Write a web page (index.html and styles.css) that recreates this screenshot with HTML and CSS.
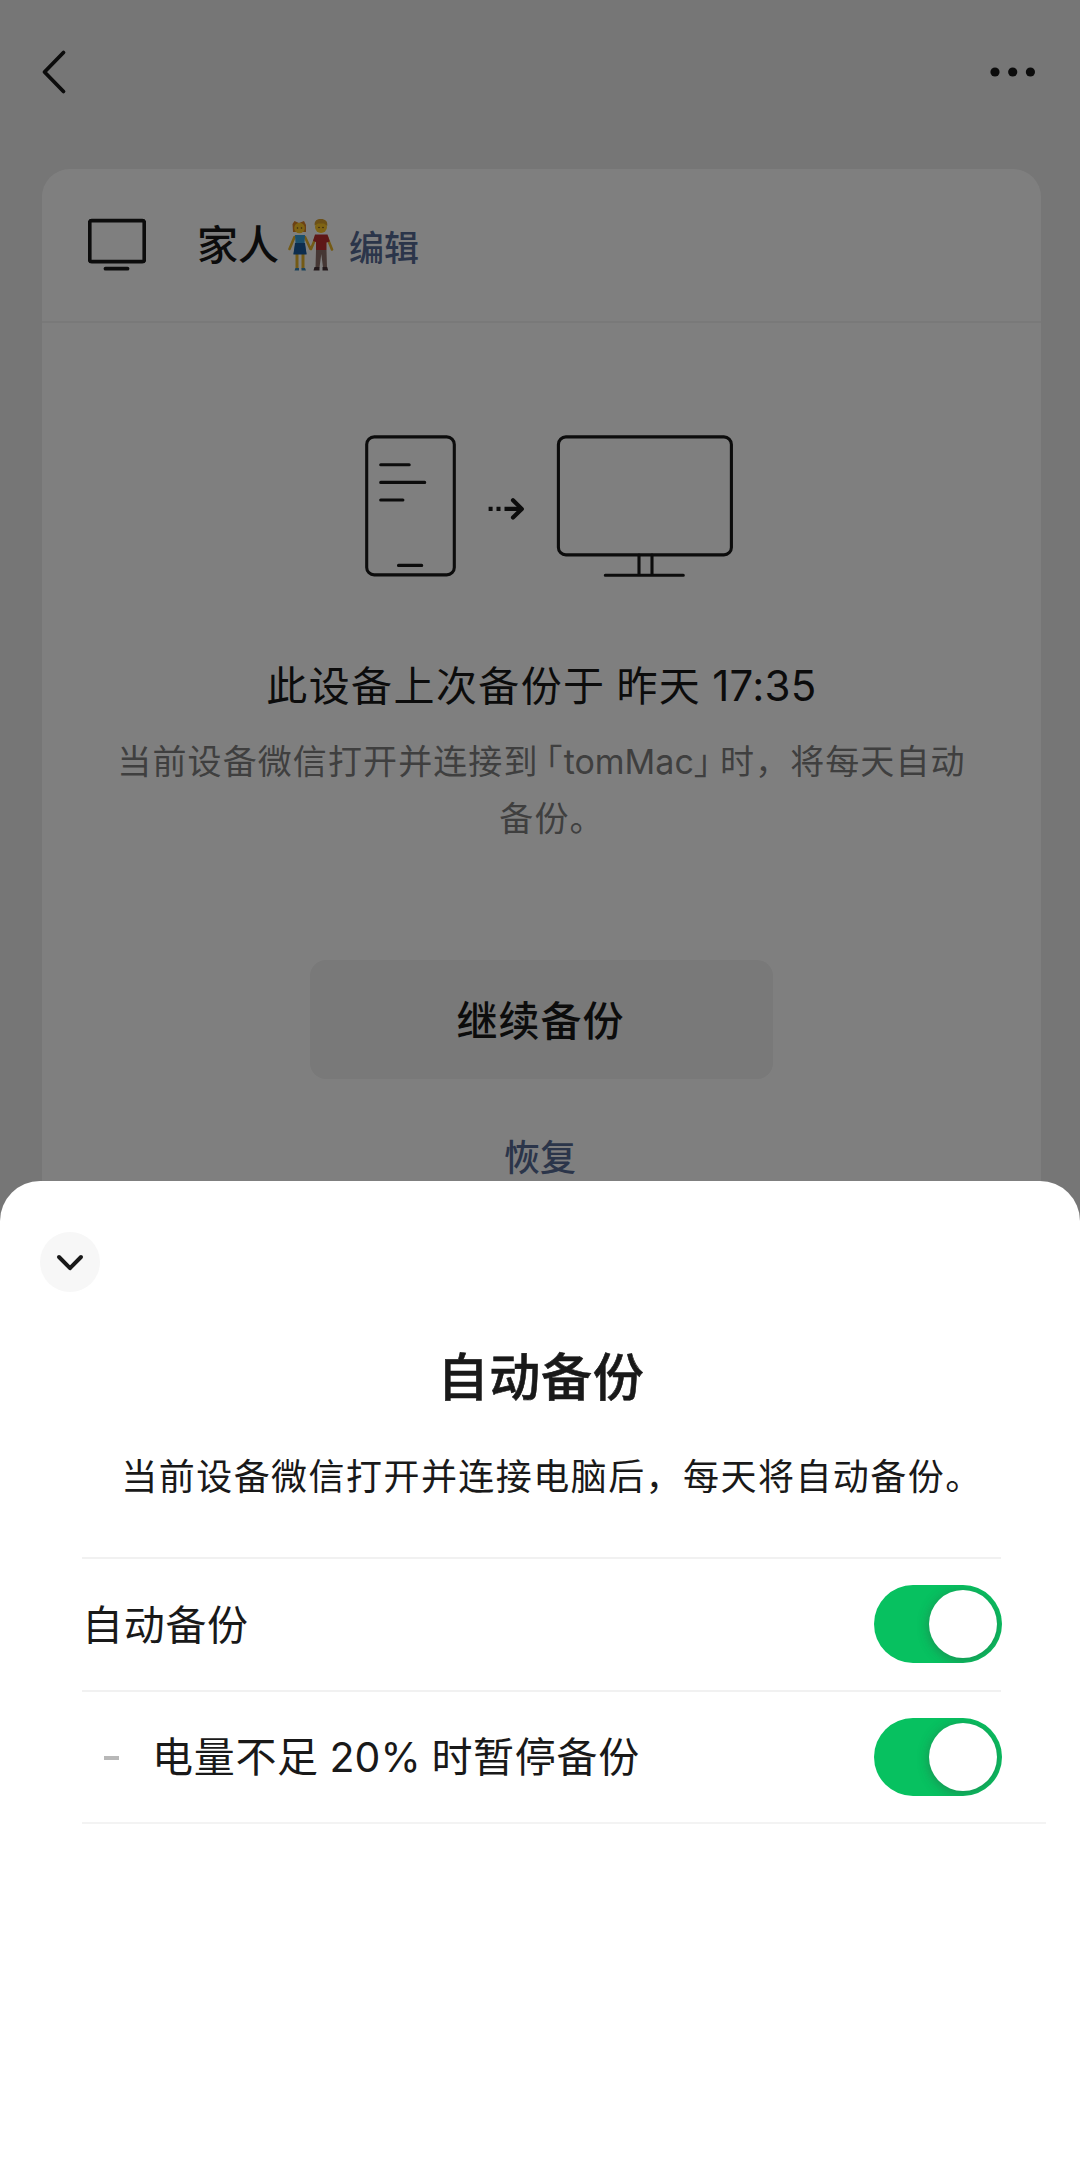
FILE: index.html
```html
<!DOCTYPE html>
<html lang="zh-CN">
<head>
<meta charset="utf-8">
<title>自动备份</title>
<link rel="stylesheet" href="styles.css">
</head>
<body>
<div class="screen">
  <header class="nav">
    <svg class="nav-back" viewBox="0 0 26 46"><path d="M22.5 3.5 3.5 23l19 19.500"/></svg>
    <svg class="nav-more" viewBox="0 0 46 10"><circle cx="5" cy="5" r="4.600"/><circle cx="22.700" cy="5" r="4.600"/><circle cx="40.400" cy="5" r="4.600"/></svg>
  </header>

  <main class="card">
    <div class="device">
      <svg class="device-icon" viewBox="0 0 58 54"><rect x="1.700" y="2.700" width="54.600" height="41" rx="2"/><path d="M17.500 50.700h22"/></svg>
      <span class="device-name">家人</span>
      <svg class="couple" viewBox="0 0 46 54">
        <g fill="none" stroke="#e8b52b" stroke-width="2.600" stroke-linecap="round">
          <path d="M6.500 19 1.500 31M17 19l5.500 12M28 19l-5 12M39 19l5 12.500"/>
          <path d="M9 33v17M15 33v17" stroke-width="3"/>
        </g>
        <path fill="#39a0d8" d="M7 17h10l-.5 8 2 11h-13l2-11z"/>
        <path fill="#1a5a9c" d="M7 25h10l1.600 11.500H5.400z"/>
        <path fill="#d98228" d="M5 14 4.500 6l2-3L11 5l5-2 2 4v7z"/>
        <circle cx="11.500" cy="10" r="5.300" fill="#ffc928"/>
        <path fill="#bd2f2f" d="M27 16.500h12.500l2.300 7-3.300 1v7.500H28v-8l-3-1z"/>
        <path fill="#8b6f68" d="M28 32h10.500l.5 17.500h-4L33.300 36l-1.800 13.500h-4z"/>
        <path fill="#473336" d="M26.500 49h5v3.500h-6zM34.500 49h4.700l1 3.500h-5.700z"/>
        <circle cx="33" cy="9" r="6" fill="#ffc928"/>
        <path fill="#d8a12e" d="M26.700 7.500C26 2 30 .8 33 1c4 0 7 2 6.200 7L36 5.500h-6z"/>
        <g fill="#6b4a25"><circle cx="9.500" cy="10" r=".8"/><circle cx="13.500" cy="10" r=".8"/><circle cx="31" cy="9.500" r=".8"/><circle cx="35" cy="9.500" r=".8"/></g>
        <path fill="#3b86b8" d="M7.500 50h3.500v2.500H6.500zM13.500 50H17l1 2.500h-4.500z"/>
      </svg>
      <a class="device-edit">编辑</a>
    </div>

    <section class="backup">
      <svg class="art" viewBox="0 0 370 144">
        <rect x="2.700" y="2.900" width="87.600" height="138" rx="7.500"/>
        <path d="M16.700 30.700h28.500M16.700 48.400h44M16.700 66h22.200M34.500 131.400h23.200"/>
        <g class="art-arrow"><path d="M124.600 74.900h4M132.500 74.900h4M140.500 74.900h17" stroke-linecap="butt"/><path d="m149 66.200 8.800 8.700-8.800 8.700"/></g>
        <rect x="194.400" y="2.900" width="173" height="118" rx="7.500"/>
        <path d="M275 121v20M288 121v20M241.300 141.200h78"/>
      </svg>
      <h2 class="status">此设备上次备份于 昨天 <span class="time">17:35</span></h2>
      <p class="hint">当前设备微信打开并连接到<span class="half open">「</span><span class="latin">tomMac</span><span class="half close">」</span>时，将每天自动<br>备份<span class="half stop">。</span></p>
      <div class="resume">继续备份</div>
      <a class="restore">恢复</a>
    </section>
  </main>
</div>

<div class="mask"></div>

<div class="sheet">
  <div class="collapse"><svg viewBox="0 0 28 18"><path d="m3 3 11 11.200L25 3"/></svg></div>
  <h1 class="sheet-title">自动备份</h1>
  <p class="sheet-desc">当前设备微信打开并连接电脑后，每天将自动备份。</p>
  <div class="options">
    <div class="option"><span class="label">自动备份</span><span class="toggle"><i class="knob"></i></span></div>
    <div class="option"><i class="dash"></i><span class="label">电量不足 <span class="latin">20%</span> 时暂停备份</span><span class="toggle"><i class="knob"></i></span></div>
    <div class="rule"></div>
  </div>
</div>
</body>
</html>
```

FILE: styles.css
```css
* { box-sizing: border-box; margin: 0; padding: 0; }
html, body { width: 1080px; height: 2167px; overflow: hidden; }
body {
  position: relative;
  background: #ededed;
  color: #191919;
  font-family: Inter, "Noto Sans CJK SC", sans-serif;
}
svg { display: block; flex: none; fill: none; stroke-linecap: round; stroke-linejoin: round; }

.screen { height: 1181px; overflow: hidden; padding: 0 39px 0 42px; }
.nav { height: 169px; padding: 49px 5px 0 0; display: flex; justify-content: space-between; align-items: flex-start; }
.nav-back { width: 26px; height: 46px; margin-left: -1px; stroke: #191919; stroke-width: 3.8px; }
.nav-more { width: 46px; height: 10px; margin-top: 18px; fill: #191919; }

.card { height: 1100px; border-radius: 28px; background: #fff; }
.device { height: 154px; display: flex; align-items: center; padding-left: 46px; border-bottom: 2px solid #f2f2f2; }
.device-icon { width: 58px; height: 54px; stroke: #191919; stroke-width: 3.8px; }
.device-name { margin-left: 51px; font-size: 41px; line-height: 60px; font-weight: 500; }
.couple { width: 46px; height: 54px; margin-left: 9px; }
.device-edit { margin-left: 15px; padding-top: 5px; font-size: 35px; line-height: 52px; font-weight: 500; color: #576b95; }

.backup { display: flex; flex-direction: column; align-items: center; }
.art { width: 370px; height: 144px; margin: 111px 0 0 14px; stroke: #191919; stroke-width: 3.1px; }
.art-arrow { stroke-width: 4.2px; }
.status { margin-top: 78px; font-size: 41px; line-height: 60px; font-weight: 400; letter-spacing: 1.4px; word-spacing: -2px; white-space: nowrap; }
.time { font-size: 42px; letter-spacing: .3px; }
.hint { margin-top: 17px; font-size: 34px; line-height: 57px; letter-spacing: 1.1px; color: #7f7f7f; text-align: center; white-space: nowrap; }
.half { font-feature-settings: "halt"; }
.open { margin-left: 7px; }
.close { margin-right: 8px; }
.stop { margin-right: -4px; }
.latin { letter-spacing: 0; }
.resume { width: 463px; height: 119px; margin-top: 113px; padding: 2px 2px 0 0; border-radius: 16px; background: #f2f2f2; font-size: 41px; line-height: 119px; font-weight: 500; letter-spacing: 1px; text-align: center; }
.restore { margin-top: 52px; padding-right: 3px; font-size: 36px; line-height: 54px; font-weight: 500; color: #576b95; }

.mask { position: absolute; inset: 0; background: rgba(0, 0, 0, .5); }

.sheet { position: absolute; left: 0; right: 0; top: 1181px; bottom: 0; padding-top: 51px; border-radius: 40px 40px 0 0; background: #fff; }
.collapse { width: 60px; height: 60px; margin-left: 40px; border-radius: 50%; background: #f7f7f7; display: flex; align-items: center; justify-content: center; }
.collapse svg { width: 28px; height: 18px; margin-top: 2px; stroke: #191919; stroke-width: 4px; }
.sheet-title { margin-top: 49px; padding-left: 2px; font-size: 51px; line-height: 74px; font-weight: 500; letter-spacing: .7px; -webkit-text-stroke: .6px #191919; text-align: center; }
.sheet-desc { margin-top: 35px; padding-left: 24px; font-size: 36px; line-height: 54px; letter-spacing: 1.45px; text-align: center; white-space: nowrap; }
.options { margin: 53px 34px 0 82px; }
.option { width: 919px; height: 132.500px; display: flex; align-items: center; border-top: 2px solid #f1f1f1; }
.label { padding-top: 1px; font-size: 41px; line-height: 60px; letter-spacing: .7px; word-spacing: -1.5px; white-space: nowrap; }
.toggle { width: 128px; height: 78px; margin: 0 -1px 0 auto; padding: 5px; border-radius: 39px; overflow: hidden; background: #07c160; }
.knob { display: block; width: 68px; height: 68px; margin-left: auto; border-radius: 50%; background: #fff; box-shadow: 0 2px 12px rgba(60, 60, 60, .4); }
.dash { width: 15px; height: 4px; margin: 2px 33px 0 22px; background: #b8b8b8; }
.rule { height: 2px; background: #f3f3f3; }
```
